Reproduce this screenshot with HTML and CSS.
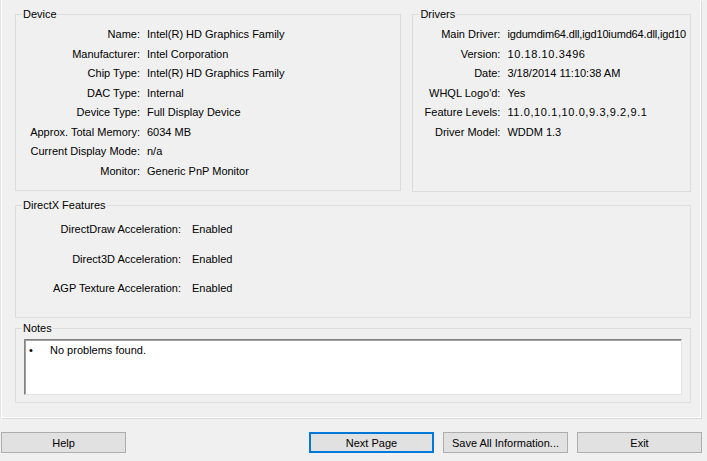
FILE: index.html
```html
<!DOCTYPE html>
<html>
<head>
  <title>DirectX Diagnostic Tool - Display</title>
  <link rel="stylesheet" href="styles.css">
</head>
<body>

  <div class="page">
    <div class="top-row">
      <fieldset class="group device">
        <legend>Device</legend>
        <div class="props">
          <span class="label">Name:</span><span class="value">Intel(R) HD Graphics Family</span>
          <span class="label">Manufacturer:</span><span class="value">Intel Corporation</span>
          <span class="label">Chip Type:</span><span class="value">Intel(R) HD Graphics Family</span>
          <span class="label">DAC Type:</span><span class="value">Internal</span>
          <span class="label">Device Type:</span><span class="value">Full Display Device</span>
          <span class="label">Approx. Total Memory:</span><span class="value">6034 MB</span>
          <span class="label">Current Display Mode:</span><span class="value">n/a</span>
          <span class="label">Monitor:</span><span class="value">Generic PnP Monitor</span>
        </div>
      </fieldset>

      <fieldset class="group drivers">
        <legend>Drivers</legend>
        <div class="props">
          <span class="label">Main Driver:</span><span class="value tight">igdumdim64.dll,igd10iumd64.dll,igd10</span>
          <span class="label">Version:</span><span class="value num">10.18.10.3496</span>
          <span class="label">Date:</span><span class="value">3/18/2014 11:10:38 AM</span>
          <span class="label">WHQL Logo'd:</span><span class="value">Yes</span>
          <span class="label">Feature Levels:</span><span class="value num">11.0,10.1,10.0,9.3,9.2,9.1</span>
          <span class="label">Driver Model:</span><span class="value">WDDM 1.3</span>
        </div>
      </fieldset>
    </div>

    <fieldset class="group directx">
      <legend>DirectX Features</legend>
      <div class="props">
        <span class="label">DirectDraw Acceleration:</span><span class="value">Enabled</span>
        <span class="label">Direct3D Acceleration:</span><span class="value">Enabled</span>
        <span class="label">AGP Texture Acceleration:</span><span class="value">Enabled</span>
      </div>
    </fieldset>

    <fieldset class="group notes">
      <legend>Notes</legend>
      <div class="notes-box">
        <div class="note"><span class="bullet">&bull;</span>No problems found.</div>
      </div>
    </fieldset>
  </div>

  <div class="buttons">
    <button class="btn">Help</button>
    <div class="spacer"></div>
    <button class="btn default">Next Page</button>
    <button class="btn">Save All Information...</button>
    <button class="btn">Exit</button>
  </div>

</body>
</html>
```

FILE: styles.css
```css
html, body {
  margin: 0;
  background-color: #f0f0f0;
}

body {
  width: 707px;
  height: 461px;
  overflow: hidden;
  font-family: "Liberation Sans", Arial, sans-serif;
  font-size: 11px;
  color: #000;
}

/* Tab page */
.page {
  box-sizing: border-box;
  width: 700px;
  height: 418px;
  margin-left: 1px;
  border: 1px solid #fff;
  border-top: none;
  box-shadow: 1px 1px 0 #dadada, -1px 0 0 #e3e3e3;
  padding: 0 9px 0 13px;
  display: flex;
  flex-direction: column;
}

.top-row {
  display: flex;
  gap: 11px;
  margin-top: 8px;
}

.group {
  margin: 0;
  padding: 0;
  border: 1px solid #dcdcdc;
  min-width: 0;
}

.group legend {
  margin-left: 6px;
  padding: 0 1px;
  line-height: 13px;
}

.props {
  display: grid;
  column-gap: 7px;
  line-height: 19.5px;
  white-space: nowrap;
}

.label {
  text-align: right;
}

.num {
  letter-spacing: 0.6px;
}

.tight {
  letter-spacing: -0.15px;
}

.device {
  width: 387px;
  height: 183px;
  box-sizing: border-box;
}

.device .props {
  grid-template-columns: 124px 1fr;
  padding-top: 4px;
}

.drivers {
  width: 279px;
  height: 184px;
  box-sizing: border-box;
}

.drivers .props {
  grid-template-columns: 87px 1fr;
  padding-top: 4px;
}

.directx {
  margin-top: 7px;
  height: 119px;
  box-sizing: border-box;
}

.directx .props {
  grid-template-columns: 165px 1fr;
  column-gap: 11px;
  line-height: 29.5px;
  padding-top: 3px;
}

.notes {
  margin-top: 4px;
  height: 81px;
  box-sizing: border-box;
}

.notes-box {
  margin: 4px 8px 0 8px;
  height: 56px;
  box-sizing: border-box;
  background-color: #fff;
  border: 1px solid;
  border-color: #828282 #e3e3e3 #e3e3e3 #828282;
  box-shadow: inset 1px 1px 0 #a0a0a0;
  padding: 3px 0 0 4px;
}

.note {
  display: flex;
  line-height: 14px;
}

.bullet {
  width: 21px;
}

/* Bottom buttons */
.buttons {
  display: flex;
  gap: 9px;
  margin-top: 14px;
  padding: 0 5px 0 1px;
}

.spacer {
  flex: 1;
}

.btn {
  width: 125px;
  height: 21px;
  box-sizing: border-box;
  background-color: #e1e1e1;
  border: 1px solid #adadad;
  font-family: inherit;
  font-size: 11px;
  color: #000;
  padding: 0;
}

.btn.default {
  border: 2px solid #0078d7;
}
```
